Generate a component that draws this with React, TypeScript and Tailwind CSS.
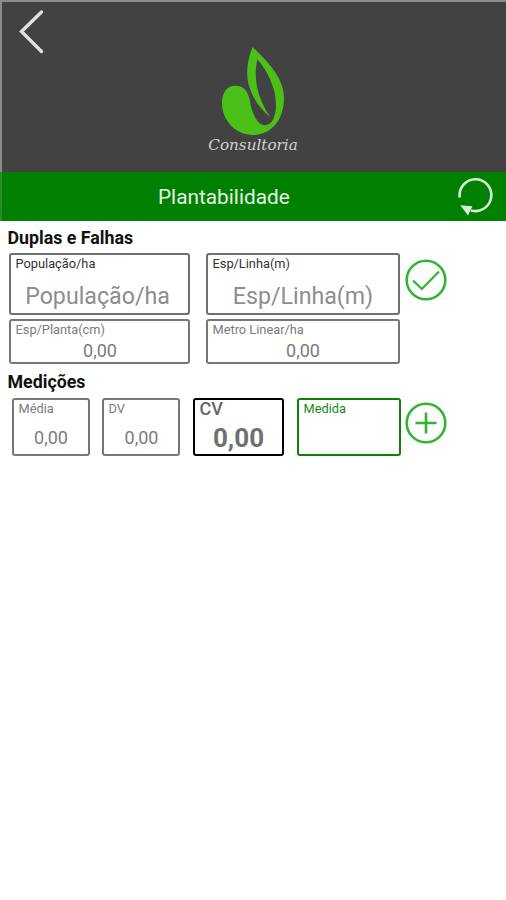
import clsx from "clsx";

type FieldProps = {
  label: string;
  value?: string;
  className?: string;
  labelClass?: string;
  valueClass?: string;
};

function Field({ label, value, className, labelClass, valueClass }: FieldProps) {
  return (
    <div className={clsx("flex flex-col rounded-[3px] border-2", className)}>
      <span className={clsx("whitespace-nowrap pl-[4.5px]", labelClass)}>{label}</span>
      <span className={clsx("whitespace-nowrap text-center", valueClass)}>{value}</span>
    </div>
  );
}

function Logo() {
  return (
    <svg viewBox="96 36 186 264" className="h-[88px] w-[62px]" fill="#4bc018">
      <path d="M188 36C207 55 224 70 240 91C264 121 282 152 282 190C282 255 243 300 190 300C135 300 96 255 96 205C96 170 112 152 136 152C163 152 175 170 180 199C185 235 203 272 225 271C248 270 258 240 258 210C258 158 232 108 202 73C190 130 200 185 241 247C203 216 180 175 173 135C168 95 178 60 188 36Z" />
    </svg>
  );
}

export default function App() {
  return (
    <div className="min-h-[900px] w-[506px] bg-white font-['Roboto',sans-serif]">
      <header className="flex h-[172px] border-l-2 border-t-2 border-[#8c8c8c] bg-[#424242]">
        <button className="ml-[16px] mt-[7px] h-[46px] w-[27px]" aria-label="Voltar">
          <svg viewBox="0 0 27 46" className="h-[46px] w-[27px]" fill="none" stroke="#e0e0e0" strokeWidth="3.4" strokeLinecap="round">
            <path d="M23.5 3L3.5 22.5L23.5 42.5" />
          </svg>
        </button>
        <div className="ml-[161px] flex w-[94px] flex-col items-center pt-[45px]">
          <Logo />
          <span className="mt-px font-['DejaVu_Serif',serif] text-[15.2px] italic leading-[18px] text-[#d2d2d2]">
            Consultoria
          </span>
        </div>
      </header>

      <div className="flex h-[49px] items-center border-l-2 border-[#2b8a2b] bg-[#008000]">
        <h1 className="ml-[156px] w-[133px] whitespace-nowrap pt-px text-[20.8px] leading-6 text-[#e4f3e4]">Plantabilidade</h1>
        <button className="ml-[165px]" aria-label="Atualizar">
          <svg viewBox="0 0 38 40" className="h-10 w-[38px]" fill="none">
            <path d="M3.7 20.5A15.9 15.9 0 1 1 15 33.4" stroke="#d5edd5" strokeWidth="2.6" />
            <path d="M4.2 28.2L16.5 29.2L12 38.5Z" fill="#d5edd5" />
          </svg>
        </button>
      </div>

      <main className="text-[#7b7b7b]">
        <h2 className="h-8 pl-[7.5px] pt-[7px] text-[17.8px] font-bold leading-5 text-[#111]">Duplas e Falhas</h2>
        <div className="flex items-start pl-[9px]">
          <div className="grid grid-cols-[181px_194px] gap-x-4 gap-y-1">
            <Field
              label="População/ha"
              value="População/ha"
              className="h-[62px] border-[#707070]"
              labelClass="text-[12.8px] leading-[18px] text-[#333]"
              valueClass="pr-1 pt-[9px] text-[23.2px] leading-7 text-[#8d8d8d]"
            />
            <Field
              label="Esp/Linha(m)"
              value="Esp/Linha(m)"
              className="h-[62px] border-[#707070]"
              labelClass="text-[12.8px] leading-[18px] text-[#333]"
              valueClass="pt-[9px] text-[23.2px] leading-7 text-[#8d8d8d]"
            />
            <Field
              label="Esp/Planta(cm)"
              value="0,00"
              className="h-[45px] border-[#777]"
              labelClass="text-[12.8px] leading-[18px]"
              valueClass="pl-px pt-px text-[18px] leading-[22px]"
            />
            <Field
              label="Metro Linear/ha"
              value="0,00"
              className="h-[45px] border-[#777]"
              labelClass="text-[12.8px] leading-[18px]"
              valueClass="pt-px text-[18px] leading-[22px]"
            />
          </div>
          <button className="ml-[5px] mt-[6px]" aria-label="Confirmar">
            <svg viewBox="0 0 42 42" className="size-[42px]" fill="none" stroke="#32b432">
              <circle cx="21" cy="21" r="19.3" strokeWidth="2.6" />
              <path d="M8 21.5L16.8 30L34 12.5" strokeWidth="2.3" />
            </svg>
          </button>
        </div>

        <h2 className="h-[34px] pl-[7.5px] pt-[8px] text-[17.8px] font-bold leading-5 text-[#111]">Medições</h2>
        <div className="flex items-start pl-[12px]">
          <Field
            label="Média"
            value="0,00"
            className="h-[58px] w-[78px] border-[#777]"
            labelClass="text-[12.8px] leading-[18px]"
            valueClass="pt-[9px] text-[18px] leading-[22px]"
          />
          <Field
            label="DV"
            value="0,00"
            className="ml-[12px] h-[58px] w-[78px] border-[#777]"
            labelClass="text-[12.8px] leading-[18px]"
            valueClass="pl-px pt-[9px] text-[18px] leading-[22px]"
          />
          <Field
            label="CV"
            value="0,00"
            className="ml-[13px] h-[58px] w-[91px] border-black"
            labelClass="text-[18px] font-medium leading-[18px] text-[#666]"
            valueClass="pt-[5px] text-[26px] font-bold leading-[30px] text-[#707070]"
          />
          <Field
            label="Medida"
            className="ml-[13px] h-[58px] w-[104px] border-[#0b820b]"
            labelClass="text-[12.8px] leading-[18px] text-[#168816]"
          />
          <button className="ml-[4px] mt-[4px]" aria-label="Adicionar">
            <svg viewBox="0 0 42 42" className="size-[42px]" fill="none" stroke="#32b432">
              <circle cx="21" cy="21" r="19.3" strokeWidth="2.6" />
              <path d="M10.5 21H31.5M21 10.5V31.5" strokeWidth="2.6" />
            </svg>
          </button>
        </div>
      </main>
    </div>
  );
}
